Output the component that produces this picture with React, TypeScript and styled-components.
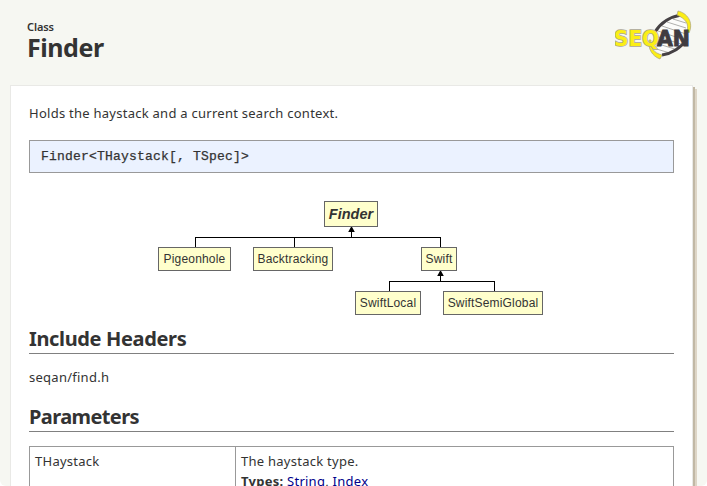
import React from "react";
import styled, { createGlobalStyle } from "styled-components";

const GlobalStyle = createGlobalStyle`
  * { box-sizing: border-box; }
  html, body { margin: 0; background: #fff; }
  body { overflow: hidden; }
`;

const Page = styled.div`
  height: 486px;
  overflow: hidden;
  background: #f6f7f2;
  border-radius: 0 0 6px 6px;
  font-family: "Noto Sans", "Open Sans", sans-serif;
  font-size: 13px;
  color: #333;
`;

const Header = styled.header`
  display: flex;
  justify-content: space-between;
  height: 85px;
  padding: 10px 14px 0 27px;
`;

const Kind = styled.div`
  margin-top: 10px;
  font-size: 11px;
  line-height: 14px;
  font-weight: 600;
  letter-spacing: -0.1px;
`;

const Title = styled.h1`
  margin: 0;
  font-size: 25px;
  line-height: 26px;
  font-weight: 700;
  letter-spacing: -0.45px;
`;

const Panel = styled.main`
  width: 683px;
  height: 420px;
  margin-left: 10px;
  padding: 17px 18px 0;
  border: 1px solid #e9e9e6;
  background: #fff;
  box-shadow: 2px 2px 0 #c1b8a5, 4px 4px 0 #ddd5c6;
`;

const Text = styled.p`
  margin: 0;
  line-height: 20px;
  letter-spacing: 0.26px;
`;

const Signature = styled.pre`
  height: 33px;
  margin: 17px 0 0;
  padding: 0 11px;
  border: 1px solid #999;
  background: #ebf2ff;
  font: 13px/31px "Liberation Mono", monospace;
  letter-spacing: 0.2px;
  -webkit-text-stroke: 0.25px #333;
`;

const Diagram = styled.div`
  position: relative;
  height: 151px;
`;

const Wires = styled.svg`
  position: absolute;
  inset: 0;
`;

const Node = styled.div<{ $x: number; $y: number; $w: number; $root?: boolean }>`
  position: absolute;
  left: ${(p) => p.$x}px;
  top: ${(p) => p.$y}px;
  width: ${(p) => p.$w}px;
  height: ${(p) => (p.$root ? 26 : 24)}px;
  border: 1px solid #666;
  background: #ffffcc;
  font-family: "Liberation Sans", Arial, sans-serif;
  font-size: ${(p) => (p.$root ? 14.5 : 12)}px;
  letter-spacing: ${(p) => (p.$root ? 0 : 0.18)}px;
  font-weight: ${(p) => (p.$root ? 700 : 400)};
  font-style: ${(p) => (p.$root ? "italic" : "normal")};
  line-height: ${(p) => (p.$root ? 24 : 22)}px;
  text-align: center;
  white-space: nowrap;
`;

const Heading = styled.h2<{ $spacing: number }>`
  height: 30px;
  margin: 0;
  border-bottom: 1px solid #808080;
  font-size: 20px;
  line-height: 29px;
  font-weight: 700;
  letter-spacing: ${(p) => p.$spacing}px;
`;

const HeaderFile = styled.div`
  height: 48px;
  padding-top: 13px;
`;

const Table = styled.div`
  display: grid;
  grid-template-columns: 206px 1fr;
  height: 80px;
  margin-top: 14px;
  border: 1px solid #999;
`;

const Cell = styled.div`
  padding: 4px 5px;
  &:first-child { border-right: 1px solid #999; }
`;

const Link = styled.a`
  color: #00008b;
  text-decoration: none;
`;

const nodes = [
  { label: "Finder", x: 295, y: 28, w: 54, root: true },
  { label: "Pigeonhole", x: 129, y: 74, w: 73 },
  { label: "Backtracking", x: 224, y: 74, w: 80 },
  { label: "Swift", x: 392, y: 74, w: 36 },
  { label: "SwiftLocal", x: 326, y: 118, w: 66 },
  { label: "SwiftSemiGlobal", x: 414, y: 118, w: 100 },
];

const Logo = () => (
  <svg width="78" height="52" viewBox="0 0 78 52">
    <path d="M37 36C34 24 46 9 64 5C78 14 76 31 66 39C60 43 54 46 48 46Z" fill="#fcfcfa" />
    <path
      d="M52 12l19 6M47 16l24 8M43 21l24 8M40 26l26 8M37 32l26 8M38 38l17 5M58 9l13 4"
      stroke="#b0b0ad"
      strokeWidth="1"
    />
    <path d="M40 22C45 14 54 7 66 5" fill="none" stroke="#454144" strokeWidth="3" />
    <path d="M47 45C56 44 66 38 72 29" fill="none" stroke="#454144" strokeWidth="3" />
    <path d="M63 1C72 3 79 12 74 23L72 21C74 14 71 9 62 5Z" fill="#fbee16" stroke="#aaa27b" strokeWidth=".7" />
    <path d="M36 30C35 38 39 43 47 45L45 49C37 46 33 39 34 30Z" fill="#fbee16" stroke="#aaa27b" strokeWidth=".7" />
    <g fontFamily="DejaVu Sans, sans-serif" fontWeight="700" fontSize="20.5" paintOrder="stroke">
      <text x="-1" y="35.5" textLength="45" lengthAdjust="spacingAndGlyphs" fill="#fbee16" stroke="#aaa593" strokeWidth="1.6">
        SEQ
      </text>
      <text x="42" y="35.5" textLength="33" lengthAdjust="spacingAndGlyphs" fill="#403c40" stroke="#403c40" strokeWidth=".9">
        AN
      </text>
    </g>
  </svg>
);

export default function App() {
  return (
    <>
      <GlobalStyle />
      <Page>
        <Header>
          <div>
            <Kind>Class</Kind>
            <Title>Finder</Title>
          </div>
          <Logo />
        </Header>
        <Panel>
          <Text>Holds the haystack and a current search context.</Text>
          <Signature>{"Finder<THaystack[, TSpec]>"}</Signature>
          <Diagram>
            <Wires width="645" height="151">
              <g fill="none" stroke="#000" shapeRendering="crispEdges">
                <path d="M166.5 74V64.5H411.5V74M265.5 64V74M322.5 64V56" />
                <path d="M360.5 118V108.5H465.5V118M411.5 108V100" />
              </g>
              <path d="M322.5 53L325.8 59H319.2ZM411.5 97L414.8 103H408.2Z" />
            </Wires>
            {nodes.map((n) => (
              <Node key={n.label} $x={n.x} $y={n.y} $w={n.w} $root={n.root}>
                {n.label}
              </Node>
            ))}
          </Diagram>
          <Heading $spacing={-0.35}>Include Headers</Heading>
          <HeaderFile>
            <Text>seqan/find.h</Text>
          </HeaderFile>
          <Heading $spacing={-0.6}>Parameters</Heading>
          <Table>
            <Cell>
              <Text>THaystack</Text>
            </Cell>
            <Cell>
              <Text>The haystack type.</Text>
              <Text>
                <b>Types:</b> <Link>String</Link>, <Link>Index</Link>
              </Text>
            </Cell>
          </Table>
        </Panel>
      </Page>
    </>
  );
}
